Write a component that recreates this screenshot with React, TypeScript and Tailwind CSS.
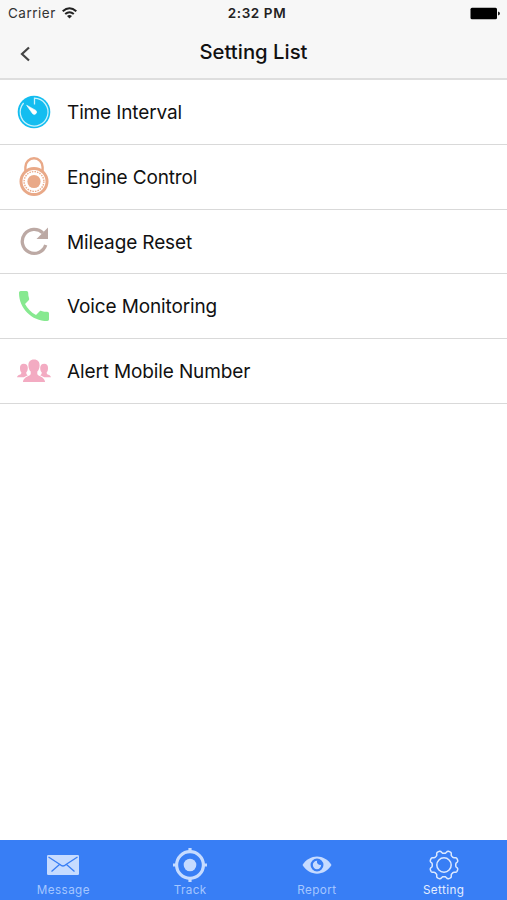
import React from "react";

const TimerIcon = () => (
  <svg width="34" height="34" viewBox="0 0 34 34">
    <circle cx="17" cy="17" r="16.3" fill="#13bdf0" />
    <path
      d="M17.5 9.5V3.2A13.9 13.9 0 1 1 6.6 8"
      fill="none"
      stroke="#c9f2fc"
      strokeWidth="1.3"
    />
    <path d="M9.6 10.2L18.9 15.4A2.2 2.2 0 0 1 15.6 18.7Z" fill="white" stroke="white" strokeWidth=".6" />
  </svg>
);

const LockIcon = () => (
  <svg width="34" height="42" viewBox="0 0 34 42" fill="none" stroke="#e9a988">
    <path d="M8.4 16V10.9a8.6 8.6 0 0 1 17.2 0v5.1" strokeWidth="2.4" />
    <circle cx="17" cy="25.5" r="13" strokeWidth="3" />
    <circle cx="17" cy="25.5" r="9.9" strokeWidth="1.4" strokeDasharray="1.5 1.1" />
    <circle cx="17" cy="25.5" r="6.6" fill="#e9a988" stroke="none" />
  </svg>
);

const ResetIcon = () => (
  <svg width="34" height="34" viewBox="0 0 34 34">
    <path
      d="M28.7 21A12 12 0 1 1 25.8 8.9"
      fill="none"
      stroke="#bca9a4"
      strokeWidth="3.3"
    />
    <path d="M31 3.5v11.500H19.500Z" fill="#bca9a4" />
  </svg>
);

const PhoneIcon = () => (
  <svg width="40" height="40" viewBox="0 0 24 24" fill="#87e990">
    <path d="M6.62 10.79c1.44 2.83 3.76 5.14 6.59 6.59l2.2-2.2c.27-.27.67-.36 1.02-.24 1.12.37 2.33.57 3.57.57.55 0 1 .45 1 1V20c0 .55-.45 1-1 1-9.39 0-17-7.61-17-17 0-.55.45-1 1-1h3.5c.55 0 1 .45 1 1 0 1.25.2 2.45.57 3.57.11.35.03.74-.25 1.02l-2.2 2.2z" />
  </svg>
);

const sidePerson =
  "M6.7 4.7c-2.6 0-3.8 1.7-3.7 4.2 0 2 .2 3.2 1.3 4.4.5 3.4-3.5 1.7-4.3 5h6.8c1.2-1 2.7-1.5 4-2.1-1-.5-1.7-1.2-1.5-2.9 1.1-1.2 1.5-2.7 1.5-4.4 0-2.6-1.5-4.2-4.1-4.2Z";

const PeopleIcon = () => (
  <svg width="34" height="24" viewBox="0 0 34 24" fill="#f3abc2">
    <path d="M17 .5c3.9 0 5.7 2.6 5.6 5.9 0 2.9-1.2 5-2.3 6.2v2.4c.3 2.4 7.1 2.3 7.8 8H5.9c.7-5.7 7.5-5.6 7.8-8v-2.4c-1.1-1.2-2.3-3.3-2.3-6.2C11.3 3.1 13.1.5 17 .5Z" />
    <path d={sidePerson} />
    <path transform="matrix(-1 0 0 1 34 0)" d={sidePerson} />
  </svg>
);

const MessageIcon = () => (
  <svg width="34" height="34" viewBox="0 0 34 34">
    <rect x="1" y="7" width="32" height="20" rx="1.2" fill="#c6dbff" />
    <path
      d="M2.5 9L14 16.5Q17 19.5 20 16.5L31.5 9M5.5 23.5L13.5 16.5M28.5 23.5L20.5 16.5"
      fill="none"
      stroke="#387ef5"
      strokeWidth="1.3"
    />
  </svg>
);

const TrackIcon = () => (
  <svg width="34" height="34" viewBox="0 0 34 34" fill="none" stroke="#c6dbff">
    <circle cx="17" cy="17" r="13.4" strokeWidth="3.2" />
    <path d="M17 0v5M17 29v5M0 17h5M29 17h5" strokeWidth="3.2" />
    <circle cx="17" cy="17" r="6.3" fill="#c6dbff" stroke="none" />
  </svg>
);

const ReportIcon = () => (
  <svg width="34" height="34" viewBox="0 0 34 34">
    <path d="M2.5 17C9.5 5.5 24.5 5.5 31.5 17C24.5 28.5 9.5 28.5 2.5 17Z" fill="#c6dbff" />
    <circle cx="17" cy="17" r="5.3" fill="none" stroke="#387ef5" strokeWidth="2.3" />
    <path d="M17 12.5Q16.300 16.800 21 17V12.500Z" fill="#387ef5" />
  </svg>
);

// wavy outline of the gear, sampled around the circle
const gearPoints = Array.from({ length: 180 }, (_, i) => {
  const a = (i * Math.PI) / 90;
  const r = 13.1 + 1.4 * Math.tanh(-2 * Math.cos(8 * a));
  return `${(17 + r * Math.sin(a)).toFixed(2)},${(17 - r * Math.cos(a)).toFixed(2)}`;
}).join(" ");

const SettingIcon = () => (
  <svg width="34" height="34" viewBox="0 0 34 34" fill="none" stroke="#dce9ff" strokeWidth="1.5">
    <polygon points={gearPoints} strokeLinejoin="round" />
    <circle cx="17" cy="17" r="7.2" />
  </svg>
);

const rows = [
  { label: "Time Interval", icon: <TimerIcon /> },
  { label: "Engine Control", icon: <LockIcon /> },
  { label: "Mileage Reset", icon: <ResetIcon /> },
  { label: "Voice Monitoring", icon: <PhoneIcon /> },
  { label: "Alert Mobile Number", icon: <PeopleIcon /> },
];

const tabs = [
  { label: "Message", icon: <MessageIcon />, active: false },
  { label: "Track", icon: <TrackIcon />, active: false },
  { label: "Report", icon: <ReportIcon />, active: false },
  { label: "Setting", icon: <SettingIcon />, active: true },
];

const StatusBar = () => (
  <div className="grid h-[27px] grid-cols-[1fr_auto_1fr] items-center pl-2 pr-[7px] text-[13.5px] text-[#333]">
    <div className="flex items-center gap-1.5">
      <span className="tracking-[0.5px]">Carrier</span>
      <svg className="mb-px" width="15" height="12" viewBox="0 0 15 12" fill="none" stroke="#222" strokeWidth="2">
        <path d="M.7 4.3Q7.5-1.7 14.3 4.3M3.2 7.1Q7.5 3.3 11.8 7.1" />
        <path d="M7.5 11.5L5 9Q7.5 7 10 9Z" fill="#222" stroke="none" />
      </svg>
    </div>
    <span className="ml-1.5 text-center font-semibold tracking-[0.6px] text-[#222]">2:32 PM</span>
    <svg className="justify-self-end" width="30" height="13" viewBox="0 0 30 13">
      <rect x=".5" y=".7" width="26.5" height="11.5" rx="1.5" fill="black" />
      <path d="M28 4.5q2 .5 2 2t-2 2Z" fill="#222" />
    </svg>
  </div>
);

const App = () => {
  return (
    <div className="flex h-[900px] w-[507px] flex-col overflow-hidden bg-white font-['Inter',sans-serif]">
      <header className="h-20 border-b-2 border-[#dedede] bg-[#f7f7f7]">
        <StatusBar />
        <div className="grid h-[51px] grid-cols-[60px_1fr_60px] items-center">
          <svg className="ml-5 mt-0.5" width="12" height="16" viewBox="0 0 12 16" fill="none" stroke="#444" strokeWidth="2.2">
            <path d="M9 1.5L2 8L9 14.5" />
          </svg>
          <h1 className="text-center text-[20.3px] font-medium text-[#111]">Setting List</h1>
        </div>
      </header>

      <ul className="flex-1">
        {rows.map((row) => (
          <li
            key={row.label}
            className="flex h-[64.75px] items-center border-b-[1.5px] border-[#d9d9d9] pl-3.5"
          >
            <span className="flex w-10 justify-center">{row.icon}</span>
            <span className="ml-[13px] pt-[3px] text-[19px] tracking-[-0.13px] text-[#111]">
              {row.label}
            </span>
          </li>
        ))}
      </ul>

      <nav className="grid h-[60px] grid-cols-4 bg-[#387ef5]">
        {tabs.map((tab) => (
          <div key={tab.label} className="flex flex-col items-center pt-2">
            {tab.icon}
            <span
              className={
                tab.active
                  ? "text-[11.7px] leading-4 tracking-[0.4px] text-[#e3edff]"
                  : "text-[11.7px] leading-4 tracking-[0.4px] text-[#a5c6ff]"
              }
            >
              {tab.label}
            </span>
          </div>
        ))}
      </nav>
    </div>
  );
};

export default App;
